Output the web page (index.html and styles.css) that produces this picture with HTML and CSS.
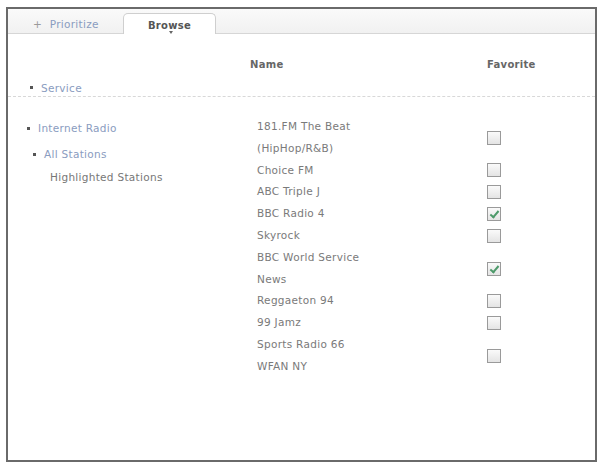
FILE: index.html
```html
<!DOCTYPE html>
<html>
<head>
<meta charset="utf-8">
<link rel="stylesheet" href="styles.css">
</head>
<body>
<div class="frame">
  <div class="tabs">
    <div class="tab tab-off"><span class="plus">+</span> Prioritize</div>
    <div class="tab tab-on">Browse</div>
  </div>
  <div class="head">
    <div class="h-name">Name</div>
    <div class="h-fav">Favorite</div>
    <div class="service"><span class="bul"></span>Service</div>
  </div>
  <div class="body">
    <ul class="tree">
      <li class="t1"><span class="bul"></span>Internet Radio</li>
      <li class="t2"><span class="bul"></span>All Stations</li>
      <li class="t3">Highlighted Stations</li>
    </ul>
    <div class="stations">
      <div class="row two"><div class="nm">181.FM The Beat<br>(HipHop/R&amp;B)</div><div class="cb"></div></div>
      <div class="row"><div class="nm">Choice FM</div><div class="cb"></div></div>
      <div class="row"><div class="nm">ABC Triple J</div><div class="cb"></div></div>
      <div class="row"><div class="nm">BBC Radio 4</div><div class="cb on"></div></div>
      <div class="row"><div class="nm">Skyrock</div><div class="cb"></div></div>
      <div class="row two"><div class="nm">BBC World Service<br>News</div><div class="cb on"></div></div>
      <div class="row"><div class="nm">Reggaeton 94</div><div class="cb"></div></div>
      <div class="row"><div class="nm">99 Jamz</div><div class="cb"></div></div>
      <div class="row two"><div class="nm">Sports Radio 66<br>WFAN NY</div><div class="cb"></div></div>
    </div>
  </div>
</div>
</body>
</html>
```
FILE: styles.css
```css
* { box-sizing: border-box; }
html, body { margin: 0; padding: 0; background: #fff; }
body {
  font-family: "DejaVu Sans", Verdana, sans-serif;
  font-size: 10.5px;
  letter-spacing: 0.3px;
  color: #7a7a7a;
}
.frame {
  margin: 7px 0 0 6px;
  width: 591px;
  height: 455px;
  border: 2px solid #6a6a6a;
  background: #fff;
}
.tabs {
  display: flex;
  height: 25px;
  background: linear-gradient(#fafafa, #f1f1f1);
  border-bottom: 1px solid #d6d6d6;
}
.tab { line-height: 14px; }
.tab-off {
  width: 115px;
  padding: 8px 0 0 25px;
  color: #8a9cc0;
}
.plus { color: #9a9a9a; margin-right: 4px; }
.tab-on {
  position: relative;
  margin-top: 4px;
  width: 93px;
  height: 21px;
  background: #fff;
  border: 1px solid #cfcfcf;
  border-bottom: none;
  border-radius: 5px 5px 0 0;
  text-align: center;
  padding-top: 5px;
  font-weight: bold;
  font-size: 10px;
  color: #555;
}
.tab-on::after {
  content: "";
  position: absolute;
  left: 45px;
  top: 17px;
  border-left: 2px solid transparent;
  border-right: 2px solid transparent;
  border-top: 3px solid #666;
}
.head {
  display: grid;
  grid-template-columns: 242px 237px 1fr;
  grid-template-rows: 14px 14px;
  row-gap: 8px;
  height: 63px;
  padding-top: 24px;
  border-bottom: 1px dashed #d8d8d8;
  line-height: 14px;
}
.h-name { grid-column: 2; grid-row: 1; font-weight: bold; color: #666; font-size: 10px; }
.h-fav { grid-column: 3; grid-row: 1; font-weight: bold; color: #666; font-size: 10px; }
.service {
  grid-column: 1; grid-row: 2;
  padding-left: 22px;
  padding-top: 1px;
  color: #8a9cc0;
  display: flex;
  align-items: center;
}
.bul {
  display: inline-block;
  width: 3px;
  height: 3px;
  background: #555;
  margin-right: 8px;
}
.body {
  display: grid;
  grid-template-columns: 242px 1fr;
}
.tree {
  list-style: none;
  margin: 0;
  padding: 24px 0 0 0;
}
.tree li { line-height: 14px; display: flex; align-items: center; }
.t1 { padding-left: 19px; color: #8a9cc0; }
.t2 { padding-left: 25px; margin-top: 12px; color: #8a9cc0; }
.t3 { padding-left: 42px; margin-top: 9px; color: #777; }
.stations {
  padding-top: 19px;
}
.row {
  display: grid;
  grid-template-columns: 237px 14px;
  align-items: center;
  line-height: 21.8px;
}
.nm { padding-left: 7px; }
.cb {
  width: 14px;
  height: 14px;
  border: 1px solid #9a9a9a;
  background: linear-gradient(#fafafa, #e4e4e4);
  position: relative;
}
.cb.on::after {
  content: "";
  position: absolute;
  left: 4px;
  top: 1px;
  width: 3px;
  height: 7px;
  border-right: 2px solid #4d9a6a;
  border-bottom: 2px solid #4d9a6a;
  transform: rotate(40deg);
}
```
